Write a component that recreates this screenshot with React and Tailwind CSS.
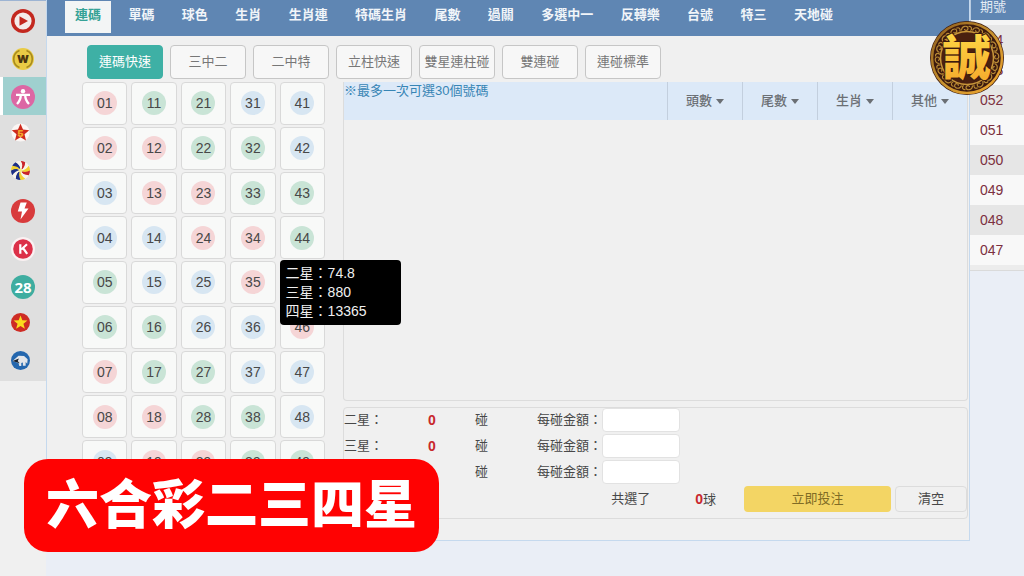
import React from 'react';

const TABS = ['連碼', '單碼', '球色', '生肖', '生肖連', '特碼生肖', '尾數', '過關', '多選中一', '反轉樂', '台號', '特三', '天地碰'];
const MODES = ['連碼快速', '三中二', '二中特', '立柱快速', '雙星連柱碰', '雙連碰', '連碰標準'];
const FILTERS = ['頭數', '尾數', '生肖', '其他'];
const DRAWS = ['054', '053', '052', '051', '050', '049', '048', '047'];
const ODDS = [['二星', '74.8'], ['三星', '880'], ['四星', '13365']];

const BALL_COLORS = {
    r: 'bg-[#f5d5d6]',
    g: 'bg-[#c9e4d6]',
    b: 'bg-[#d7e6f2]'
};

// Ball colours, one string per row: 01 11 21 31 41, 02 12 22 ...
const BALL_ROWS = ['rggbb', 'rrggb', 'brrgg', 'bbrrg', 'gbbrr', 'ggbbr', 'rggbb', 'rrggb', 'brrgg'];

const PINWHEEL = ['#c9252b', '#f7f3ea', '#f2d230', '#c9252b', '#f7f3ea', '#f2d230', '#1d2f86', '#f7f3ea', '#1d2f86', '#f2d230', '#1d2f86', '#f7f3ea'];

const STAR = 'M12 3.2l2.3 6.1 6.5.3-5.1 4 1.8 6.3L12 16.3l-5.5 3.6 1.8-6.3-5.1-4 6.5-.3z';

const GAMES = [
    {
        name: '影片',
        art: (
            <>
                <circle cx="12" cy="12" r="12" fill="#c3281f" />
                <circle cx="12" cy="12" r="8.6" fill="#f4ecea" />
                <path d="M8.5 7.2l8.5 4.8-8.5 4.8z" fill="#c3281f" />
            </>
        )
    },
    {
        name: '威力彩',
        art: (
            <>
                <circle cx="12" cy="12" r="11" fill="#e9cb45" />
                <path d="M8.5 3.600a9 9 0 0 0 0 16.800M15.500 3.600a9 9 0 0 1 0 16.800" fill="none" stroke="#a88a1e" strokeWidth="1.6" />
                <text x="12" y="16" textAnchor="middle" fontSize="11" fontWeight="900" fill="#4a3510" fontFamily="Inter, sans-serif">W</text>
            </>
        )
    },
    {
        name: '六合彩',
        active: true,
        art: (
            <>
                <circle cx="12" cy="12" r="12" fill="#dc67a4" />
                <circle cx="12" cy="6.2" r="2.2" fill="#fff" />
                <path d="M5 9.800h14M9.800 10c0 4-1.300 6.500-3.800 9M14.200 10c0 4 1.300 6.500 3.800 9" fill="none" stroke="#fff" strokeWidth="2.3" />
            </>
        )
    },
    {
        name: '五星彩',
        small: true,
        art: (
            <>
                <circle cx="12" cy="12" r="11.5" fill="#fbf6f4" />
                <path d="M12 1l3.200 7.300 7.800.7-5.900 5.300 1.800 7.900L12 18l-6.900 4.200 1.800-7.900L1 9l7.800-.7z" fill="#cf2a1c" />
                <text x="12" y="17.5" textAnchor="middle" fontSize="12" fontWeight="900" fill="#f4a62a" fontFamily="Inter, sans-serif">5</text>
            </>
        )
    },
    {
        name: '大樂透',
        small: true,
        art: (
            <>
                <circle cx="12" cy="12" r="12" fill="#f7f3ea" />
                {PINWHEEL.map((color, i) => (
                    <path key={i} d="M12 12Q15.500 7 12 0Q15.200 0 18 1.600Q19.500 8 12 12z" fill={color} transform={`rotate(${i * 30} 12 12)`} />
                ))}
                <circle cx="12" cy="12" r="2.5" fill="#f6e88a" />
            </>
        )
    },
    {
        name: '極速彩',
        art: (
            <>
                <circle cx="12" cy="12" r="12" fill="#d83b3c" />
                <path d="M9.500 3.500h6.300l-2.300 6h4L9.500 20.500l1.500-8H6.800z" fill="#fff" />
            </>
        )
    },
    {
        name: '快樂彩',
        art: (
            <>
                <circle cx="12" cy="12" r="12" fill="#faf1f2" />
                <circle cx="12" cy="12" r="9.8" fill="#dc3048" />
                <path d="M9.300 7.200v9.600M16 7.200l-5.700 5.300M12 11l4.200 5.800" fill="none" stroke="#fff" strokeWidth="2.2" />
            </>
        )
    },
    {
        name: '幸運28',
        art: (
            <>
                <circle cx="12" cy="12" r="12" fill="#3eada0" />
                <text x="12" y="17.5" textAnchor="middle" fontSize="15" fontWeight="700" fill="#fff" fontFamily="Open Sans, sans-serif">28</text>
            </>
        )
    },
    {
        name: '越南彩',
        small: true,
        art: (
            <>
                <circle cx="12" cy="12" r="12" fill="#ce2c24" />
                <path d={STAR} fill="#fbdc1e" />
            </>
        )
    },
    {
        name: '天天樂',
        small: true,
        art: (
            <>
                <circle cx="12" cy="12" r="12" fill="#2467ae" />
                <path d="M2 12.500L9.500 6l7 .3 4.500 4.200-.5 5.500-2-2v4.500h-3.500v-4l-2 .5V19h-2.500l-1-4z" fill="#e3e6ea" />
                <path d="M2 12.500l8-3-1.500 3 2.500 3z" fill="#15202e" />
            </>
        )
    }
];

function Sidebar() {
    return (
        <div className="w-[46px] shrink-0 bg-[#f0f0f0]">
            <nav className="flex flex-col border-t border-[#9db4d3] bg-[#dfdfdf]">
                {GAMES.map((game) => (
                    <a
                        key={game.name}
                        href="#"
                        aria-label={game.name}
                        className={`flex h-[38px] items-start pt-2 ${game.active ? 'border-l-3 border-white bg-[#9fd0cf] pl-2' : 'pl-[11px]'}`}
                    >
                        <svg viewBox="0 0 24 24" className={game.small ? 'size-[19px]' : 'size-6'}>
                            {game.art}
                        </svg>
                    </a>
                ))}
            </nav>
        </div>
    );
}

function TopTabs() {
    return (
        <nav className="flex h-9 items-start bg-[#5f86b3] pt-px pl-[18px]">
            <div className="flex w-[778px] justify-between">
                {TABS.map((tab, i) => (
                    <a
                        key={tab}
                        href="#"
                        className={`h-8 px-[10px] text-[13px] leading-7 font-bold whitespace-nowrap ${i === 0 ? 'bg-[#f3f5f5] text-[#35a296]' : 'text-[#f1f5f9]'}`}
                    >
                        {tab}
                    </a>
                ))}
            </div>
        </nav>
    );
}

function ModeButtons() {
    return (
        <div className="flex gap-[7px] pl-10">
            {MODES.map((mode, i) => (
                <button
                    key={mode}
                    type="button"
                    className={`h-[34px] w-[76px] rounded-sm border text-[13px] whitespace-nowrap ${i === 0 ? 'border-[#3eb0a5] bg-[#3eb0a5] text-white' : 'border-[#c6c6c6] bg-[#f7f7f7] text-[#777]'}`}
                >
                    {mode}
                </button>
            ))}
        </div>
    );
}

function OddsTooltip() {
    return (
        <div role="tooltip" className="absolute -top-px left-0 z-10 h-[65px] w-[121px] rounded-sm bg-black px-[6px] py-1 text-left text-sm leading-[19px] text-[#f0f0f0]">
            {ODDS.map(([label, value]) => (
                <div key={label}>{label}：{value}</div>
            ))}
        </div>
    );
}

function NumberBoard() {
    return (
        <div className="grid h-[401px] w-[243px] shrink-0 grid-cols-5 grid-rows-9 gap-x-1 gap-y-[2px]">
            {BALL_ROWS.map((row, r) =>
                row.split('').map((color, c) => {
                    const number = String(c * 10 + r + 1).padStart(2, '0');
                    return (
                        <div key={number} className="relative">
                            <button
                                type="button"
                                className="flex h-full w-full items-center justify-center rounded-sm border border-[#d9d9d9] bg-[#f8f9f8]"
                            >
                                <span className={`flex size-6 items-center justify-center rounded-full text-sm text-[#484848] ${BALL_COLORS[color]}`}>
                                    {number}
                                </span>
                            </button>
                            {number === '45' && <OddsTooltip />}
                        </div>
                    );
                })
            )}
        </div>
    );
}

function SelectionPanel() {
    return (
        <section className="flex h-[319px] flex-col rounded-b-sm border border-t-0 border-[#dcdcdc]">
            <div className="flex h-[38px] bg-[#dce9f8]">
                <p className="flex-1 text-[13px] leading-[18px] text-[#3785b5]">※最多一次可選30個號碼</p>
                {FILTERS.map((filter) => (
                    <button
                        key={filter}
                        type="button"
                        aria-haspopup="menu"
                        className="flex w-[75px] items-center justify-center gap-1 border-l border-[#c3cfde] text-[13px] font-medium text-[#6b6f74]"
                    >
                        {filter}
                        <svg viewBox="0 0 8 5" className="h-[5px] w-2">
                            <path d="M0 0h8L4 5z" fill="currentColor" />
                        </svg>
                    </button>
                ))}
            </div>
        </section>
    );
}

function BetForm() {
    return (
        <form className="mt-[6px] flex h-[112px] flex-col rounded-sm border border-[#dcdcdc] text-[13px] text-[#484848]">
            {['二星：', '三星：', ''].map((label, i) => (
                <div key={i} className="mb-[2px] grid h-6 grid-cols-[84px_47px_62px_65px_78px] items-center last-of-type:mb-0">
                    <span>{label}</span>
                    <b className="text-sm text-[#c8282d]">{label && '0'}</b>
                    <span>碰</span>
                    <label htmlFor={`amount-${i}`}>每碰金額：</label>
                    <input id={`amount-${i}`} type="text" className="h-6 w-full rounded-sm border border-[#e2e2e2] bg-white px-1" />
                </div>
            ))}
            <div className="flex h-[26px] items-center justify-end">
                <span className="mr-[45px]">共選了</span>
                <span className="mr-7"><b className="text-sm text-[#c8282d]">0</b>球</span>
                <button type="button" className="mr-1 h-full w-[147px] rounded-sm bg-[#f3d564] text-[#806c25]">立即投注</button>
                <button type="button" className="h-full w-[72px] rounded-sm border border-[#dcdcdc]">清空</button>
            </div>
        </form>
    );
}

function DrawHistory() {
    return (
        <aside className="w-[54px] shrink-0">
            <table className="w-full border-separate border-spacing-0 bg-[#f8f8f8] text-left text-sm">
                <thead>
                    <tr>
                        <th className="h-[25px] border-b-5 border-l border-b-[#f5f5f5] border-l-[#b9cbe0] bg-[#5f86b3] p-0 pl-[9px] align-top text-[13px] leading-[14px] font-normal text-[#e3ebf4]">期號</th>
                    </tr>
                </thead>
                <tbody>
                    {DRAWS.map((draw) => (
                        <tr key={draw} className="h-[30px] odd:bg-[#e6e6e6]">
                            <td className="p-0 pl-[10px] text-[#7c3040]">{draw}</td>
                        </tr>
                    ))}
                </tbody>
            </table>
            <div className="h-[6px] border-b border-[#dadada] bg-[#ececec]" />
        </aside>
    );
}

function CoinLogo() {
    return (
        <svg viewBox="0 0 76 76" className="absolute top-[20px] right-[19px] size-[76px]">
            <defs>
                <linearGradient id="coin-ring" x1="0" y1="0" x2="1" y2="1">
                    <stop offset="0" stopColor="#8a5a1c" />
                    <stop offset="0.5" stopColor="#c8922f" />
                    <stop offset="1" stopColor="#f0a52c" />
                </linearGradient>
                <linearGradient id="coin-text" x1="0" y1="0" x2="0" y2="1">
                    <stop offset="0" stopColor="#ffe24a" />
                    <stop offset="1" stopColor="#f5a52a" />
                </linearGradient>
            </defs>
            <circle cx="38" cy="38" r="37" fill="#3c1a0e" />
            <circle cx="38" cy="38" r="35" fill="none" stroke="url(#coin-ring)" strokeWidth="2.5" />
            {Array.from({ length: 16 }, (_, i) => (
                <g key={i} transform={`rotate(${i * 22.5} 38 38)`} fill="none" stroke="#b98a35" strokeWidth="1.2">
                    <path d="M32.500 10.500C32.500 5.500 39 5 39 8.500C39 11 35.500 11 35.500 9" />
                    <path d="M39.500 6.500C42.500 6 43.500 9 41.500 10.800" />
                </g>
            ))}
            <circle cx="38" cy="38" r="26.5" fill="#4a200f" stroke="#c8963a" strokeWidth="1.5" />
            <text x="38" y="55" textAnchor="middle" fontSize="48" fontWeight="900" fill="url(#coin-text)" stroke="#3c1a0e" strokeWidth="2" paintOrder="stroke" fontFamily="Noto Sans CJK TC, sans-serif">誠</text>
        </svg>
    );
}

export default function App() {
    return (
        <div className="relative flex min-h-screen bg-[#eaeef6] font-['Liberation_Sans','Noto_Sans_CJK_TC',sans-serif]">
            <Sidebar />
            <div className="min-w-0 flex-1">
                <main className="border-r border-b border-l border-[#c5d9ee] bg-[#f0f0f0] pb-[21px]">
                    <TopTabs />
                    <div className="pt-[9px]">
                        <ModeButtons />
                    </div>
                    <div className="flex gap-[18px] pt-[3px] pr-px pl-[35px]">
                        <NumberBoard />
                        <div className="flex-1">
                            <SelectionPanel />
                            <BetForm />
                        </div>
                    </div>
                </main>
            </div>
            <DrawHistory />
            <CoinLogo />
            <h1 className="absolute bottom-6 left-6 flex h-[93px] items-center rounded-3xl bg-[#ff0202] px-[22px] text-[53px] leading-none font-black whitespace-nowrap text-white">
                六合彩二三四星
            </h1>
        </div>
    );
}
